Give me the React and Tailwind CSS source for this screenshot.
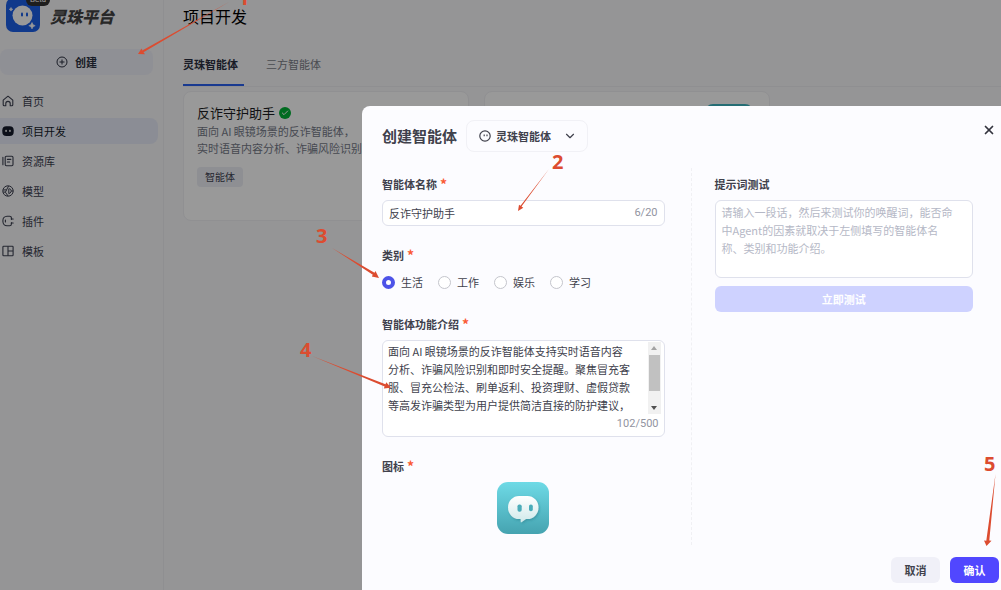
import { Check, ChevronDown, X } from "lucide-react";

const HomeIcon = () => (
  <svg viewBox="0 0 12 12" className="size-3" fill="none" stroke="currentColor" strokeWidth="1.1" strokeLinejoin="round">
    <path d="M1.2 5.2 6 1.2l4.8 4v4.6a1 1 0 0 1-1 1H8.2V8.6a2.2 2.2 0 0 0-4.4 0v2.2H2.2a1 1 0 0 1-1-1z" />
  </svg>
);

const BotIcon = () => (
  <svg viewBox="0 0 12 12" className="size-3">
    <rect x="0.3" y="1.3" width="11.4" height="9.6" rx="4" fill="currentColor" />
    <rect x="3.3" y="4.8" width="1.5" height="2.2" rx="0.7" fill="#fff" />
    <rect x="7.2" y="4.8" width="1.5" height="2.2" rx="0.7" fill="#fff" />
  </svg>
);

const LibraryIcon = () => (
  <svg viewBox="0 0 12 12" className="size-3" fill="none" stroke="currentColor" strokeWidth="1.1" strokeLinecap="round">
    <rect x="3.2" y="1.2" width="7.8" height="9.6" rx="1.2" />
    <path d="M.9 2.2v7.6M5.4 4.4h3.4M5.4 7h2.2" />
  </svg>
);

const ModelIcon = () => (
  <svg viewBox="0 0 12 12" className="size-3" fill="none" stroke="currentColor" strokeWidth="1">
    <circle cx="6" cy="6" r="5.2" />
    <path d="M1.200 5 4.600 4.800 6.600 1M4.600 4.800 3.400 7.200 6 11M3.400 7.200 1.200 7M6.800 3.800v4.800M6.800 3.800c3-.6 3.200 4.400 0 4.800M9 6h2.200" />
  </svg>
);

const PluginIcon = () => (
  <svg viewBox="0 0 12 12" className="size-3" fill="none" stroke="currentColor" strokeWidth="1.1" strokeLinecap="round">
    <path d="M9.4 3.6V3a1.8 1.8 0 0 0-1.8-1.800H5A4.200 4.200 0 0 0 .9 5.400v1.200A4.200 4.200 0 0 0 5 10.800h2.600A1.800 1.800 0 0 0 9.400 9v-.6" />
    <path d="M9.400 3.600v.8M9.400 7.600v.8M9.400 4h1.800M9.400 8h1.800M3.400 5v2" />
  </svg>
);

const TemplateIcon = () => (
  <svg viewBox="0 0 12 12" className="size-3" fill="none" stroke="currentColor" strokeWidth="1.1">
    <rect x="0.9" y="1.2" width="10.2" height="9.6" rx="0.8" />
    <path d="M6 1.2v9.6M6 6h5" />
  </svg>
);

const navigation = [
  { title: "首页", icon: HomeIcon },
  { title: "项目开发", icon: BotIcon, active: true },
  { title: "资源库", icon: LibraryIcon },
  { title: "模型", icon: ModelIcon },
  { title: "插件", icon: PluginIcon },
  { title: "模板", icon: TemplateIcon },
];

const categories = ["生活", "工作", "娱乐", "学习"];

const intro = `面向 AI 眼镜场景的反诈智能体支持实时语音内容
分析、诈骗风险识别和即时安全提醒。聚焦冒充客
服、冒充公检法、刷单返利、投资理财、虚假贷款
等高发诈骗类型为用户提供简洁直接的防护建议，`;

const testHint = `请输入一段话，然后来测试你的唤醒词，能否命
中Agent的因素就取决于左侧填写的智能体名
称、类别和功能介绍。`;

const Logo = () => (
  <div className="relative -mt-0.5 size-[34px] shrink-0">
    <svg viewBox="0 0 34 34" className="size-full">
      <rect width="34" height="34" rx="7" fill="#1c5fe8" />
      <circle cx="16.5" cy="17.5" r="10" fill="#fff" />
      <rect x="15" y="14.5" width="2" height="4" rx="1" fill="#1c5fe8" />
      <rect x="20" y="14.5" width="2" height="4" rx="1" fill="#1c5fe8" />
      <path d="M26 24.5q.5 2.7 3.2 3.2-2.7.5-3.2 3.2-.5-2.7-3.2-3.2 2.7-.5 3.2-3.2zM5 9.500q.3 1.500 1.800 1.800-1.500.3-1.800 1.800-.3-1.500-1.800-1.800 1.500-.3 1.800-1.800z" fill="#fff" stroke="#fff" strokeWidth=".6" />
    </svg>
    <span className="absolute -top-1 left-5 rounded-full bg-[#333] px-1 font-[Roboto,sans-serif] text-[8px] leading-3 text-white">
      Beta
    </span>
  </div>
);

const Sidebar = () => (
  <aside className="w-[164px] shrink-0 border-r border-[#efeff2] bg-[#f8f8fb]">
    <div className="flex h-8 items-center gap-2.5 pl-1.5">
      <Logo />
      <span className="text-base leading-8 font-black text-[#444] italic">灵珠平台</span>
    </div>
    <button className="mt-[17px] flex h-[26px] w-[153px] items-center justify-center gap-[7px] rounded-lg bg-[#eff0f8] text-[11px] font-bold text-[#2b3040]">
      <svg viewBox="0 0 12 12" className="size-3" fill="none" stroke="currentColor" strokeWidth="1">
        <circle cx="6" cy="6" r="5" />
        <path d="M6 3.500v5M3.500 6h5" />
      </svg>
      创建
    </button>
    <nav className="mt-[13px] flex flex-col gap-1">
      {navigation.map((item) => (
        <a
          key={item.title}
          href="#"
          className={`flex h-[26px] w-[158px] items-center gap-2 rounded-r-lg pl-0.5 text-[11px] ${
            item.active ? "bg-[#e8ecf8] text-[#141a2b]" : "text-[#3d4150]"
          }`}
        >
          <item.icon />
          {item.title}
        </a>
      ))}
    </nav>
  </aside>
);

const Projects = () => (
  <main className="min-w-0 flex-1 bg-[#f8f8fb] pl-[19px]">
    <h1 className="text-base leading-8 text-black">项目开发</h1>
    <div className="mt-5 flex h-[35px] gap-[22px] border-b border-[#efeff2] text-[11px]">
      <a href="#" className="w-[61px] border-b-2 border-[#2a62f0] leading-6 font-bold text-[#2b3040]">
        灵珠智能体
      </a>
      <a href="#" className="leading-6 text-[#7b7e88]">
        三方智能体
      </a>
    </div>
    <div className="mt-1 flex gap-[15px]">
      <article className="h-[130px] w-[286px] rounded-lg border border-[#f0f0f4] bg-white px-[13px] pt-[11px]">
        <h2 className="flex items-center gap-1 text-[13px] leading-5 text-[#1c1d22]">
          反诈守护助手
          <span className="flex size-3 items-center justify-center rounded-full bg-[#00b336] text-white">
            <Check size={8} strokeWidth={3} />
          </span>
        </h2>
        <p className="text-[11px] leading-[17px] whitespace-nowrap text-[#757a88]">
          面向 AI 眼镜场景的反诈智能体，
          <br />
          实时语音内容分析、诈骗风险识别和
        </p>
        <span className="mt-2.5 inline-block rounded-sm bg-[#edeff6] px-2 text-[10px] leading-5 text-[#3d4150]">
          智能体
        </span>
      </article>
      <article className="flex h-[130px] w-[286px] justify-end rounded-lg border border-[#f0f0f4] bg-white px-4 pt-3">
        <span className="size-12 rounded-lg bg-[#3fb6c2]" />
      </article>
    </div>
  </main>
);

const Required = () => <span className="text-sm leading-3 text-[#fa5a35]">*</span>;

const Label = ({ children, htmlFor }) => (
  <label htmlFor={htmlFor} className="flex h-4 items-center gap-[3px] text-[11px] leading-4 font-bold text-[#40414c]">
    {children}
    <Required />
  </label>
);

const AgentForm = () => (
  <div className="flex flex-col gap-[21px] border-r border-dashed border-[#f0f0f4] pt-2 pr-[26px] pb-[11px]">
    <div className="flex flex-col gap-2">
      <Label htmlFor="name">智能体名称</Label>
      <div className="flex h-[26px] items-center rounded-md border border-[#dfe1ec] bg-white px-1.5 text-[11px]">
        <input id="name" defaultValue="反诈守护助手" className="min-w-0 flex-1 text-[#40414c] outline-none" />
        <span className="font-[Roboto,sans-serif] text-[#92949f]">6/20</span>
      </div>
    </div>

    <fieldset className="flex flex-col gap-2">
      <legend className="contents">
        <span className="flex h-4 items-center gap-[3px] text-[11px] leading-4 font-bold text-[#40414c]">
          类别
          <Required />
        </span>
      </legend>
      <div className="flex h-[22px] items-center gap-[15px]">
        {categories.map((name, i) => (
          <label key={name} className="flex items-center gap-1.5 text-[11px] text-[#40414c]">
            <input
              type="radio"
              name="category"
              defaultChecked={i === 0}
              className="size-[13px] appearance-none rounded-full border border-[#c4c5cc] bg-white checked:border-4 checked:border-[#4d53e8]"
            />
            {name}
          </label>
        ))}
      </div>
    </fieldset>

    <div className="flex flex-col gap-2 pt-0.5">
      <Label htmlFor="intro">智能体功能介绍</Label>
      <div className="h-[97px] rounded-md border border-[#dfe1ec] bg-white pt-px pr-[3px] pl-[5px]">
        <div className="flex">
          <textarea
            id="intro"
            rows={4}
            defaultValue={intro}
            className="min-w-0 flex-1 resize-none overflow-hidden text-[11px] leading-[18px] text-[#40414c] outline-none"
          />
          <div className="flex w-[13px] flex-col items-center justify-between bg-[#f1f1f1] py-1">
            <span className="border-x-[3px] border-b-4 border-x-transparent border-b-[#a3a3a3]" />
            <span className="mb-2.5 h-9 w-[11px] bg-[#c1c1c1]" />
            <span className="border-x-[3px] border-t-4 border-x-transparent border-t-[#505050]" />
          </div>
        </div>
        <p className="pr-0.5 text-right font-[Roboto,sans-serif] text-[11px] leading-5 text-[#92949f]">102/500</p>
      </div>
    </div>

    <div className="flex flex-col gap-2">
      <Label>图标</Label>
      <button aria-label="图标" className="self-center">
        <svg viewBox="0 0 52 52" className="size-[52px]">
          <defs>
            <linearGradient id="tile" x1="0" y1="0" x2="0" y2="1">
              <stop stopColor="#6edae6" />
              <stop offset="1" stopColor="#45a3b0" />
            </linearGradient>
            <linearGradient id="face" x1="0" y1="0" x2="0" y2="1">
              <stop stopColor="#fff" />
              <stop offset="1" stopColor="#cfe9ea" />
            </linearGradient>
            <filter id="soft" x="-20%" y="-20%" width="140%" height="150%">
              <feDropShadow dx="1" dy="1.5" stdDeviation="1.2" floodColor="#2c7f8c" floodOpacity=".5" />
            </filter>
          </defs>
          <rect width="52" height="52" rx="11" fill="url(#tile)" />
          <path
            d="M22 14h8.500a11 11.500 0 0 1 0 23H29l-4.500 3.300q-.8.300-.8-.8V37H22a11 11.500 0 0 1 0-23z"
            fill="url(#face)"
            filter="url(#soft)"
          />
          <rect x="20.500" y="22.500" width="4.200" height="7.200" rx="1.800" fill="#4aacb9" />
          <rect x="32" y="22.500" width="3.800" height="6.800" rx="1.800" fill="#4aacb9" />
        </svg>
      </button>
    </div>
  </div>
);

const PromptTest = () => (
  <div className="flex flex-col gap-2 pt-2 pr-7 pl-[23px]">
    <label htmlFor="prompt" className="text-[11px] leading-4 font-bold text-[#40414c]">
      提示词测试
    </label>
    <textarea
      id="prompt"
      placeholder={testHint}
      className="h-[78px] resize-none rounded-md border border-[#dfe1ec] bg-white px-1.5 pt-0.5 text-[11px] leading-[18px] outline-none placeholder:text-[#b5b8c6]"
    />
    <button className="h-[26px] rounded-md bg-[#ced2ff] text-[11px] font-bold text-white">立即测试</button>
  </div>
);

const CreateDialog = () => (
  <div className="absolute inset-0 flex bg-black/40 pt-[106px] pl-[362px]">
    <section role="dialog" aria-label="创建智能体" className="flex min-w-0 flex-1 flex-col rounded-tl-lg bg-[#fcfcff] pt-3.5 pl-5">
      <header className="flex items-center gap-[9px] pr-[5px]">
        <h2 className="text-[15px] leading-[30px] font-bold text-[#40414c]">创建智能体</h2>
        <div className="flex h-8 w-[122px] items-center gap-[5px] rounded-lg border border-[#f1f1f6] pl-3 text-[#40414c]">
          <svg viewBox="0 0 12 12" className="size-3 shrink-0" fill="none" stroke="currentColor" strokeWidth="1.2">
            <circle cx="6" cy="6" r="5.200" />
            <path d="M5.200 4.500v1.800M8 4.500v1.800" />
          </svg>
          <select aria-label="智能体类型" className="w-[62px] appearance-none text-[11px] font-bold outline-none">
            <option>灵珠智能体</option>
          </select>
          <ChevronDown size={14} strokeWidth={2} />
        </div>
        <button aria-label="关闭" className="mt-[-13px] ml-auto text-[#33343e]">
          <X size={14} strokeWidth={3} />
        </button>
      </header>
      <div className="mt-4 grid grid-cols-2">
        <AgentForm />
        <PromptTest />
      </div>
      <footer className="mt-3 flex justify-end gap-2.5 pr-0.5 text-[11px] font-bold">
        <button className="h-[26px] w-[49px] rounded-md bg-[#f0f0f8] text-[#40414c]">取消</button>
        <button className="h-[26px] w-[49px] rounded-md bg-[#5147ff] text-white">确认</button>
      </footer>
    </section>
  </div>
);

// numbered steps with their arrows, drawn over the whole page
const Steps = () => (
  <div className="pointer-events-none absolute inset-0 overflow-hidden font-['Noto_Sans',sans-serif] text-xl leading-5 font-bold text-[#dc4c30]">
    <svg width="1001" height="590" className="absolute top-0 left-0" fill="currentColor">
      <path d="M229 2 143.500 52.300l1.500 2L138 54l3.500-5.500.8 2z" />
      <path d="m549 169-27.500 37.500 1.800 1.200-5.300 3.300 1-6.300 1.500 1z" />
      <path d="m332 248 42.500 24.800 1-1.800 3.500 7-7.200-1.500 1-1.800z" />
      <path d="m312 356 73.500 28.200.8-2 4.700 5.500-7.200.8.8-2z" />
      <path d="m995.500 474-6.200 66.500 2.200.3L986.500 546l-2.500-5.500 2.300.2z" />
    </svg>
    <span className="absolute -top-3 left-[238px]">1</span>
    <span className="absolute top-[152px] left-[552px]">2</span>
    <span className="absolute top-[226px] left-[316px]">3</span>
    <span className="absolute top-[340px] left-[300px]">4</span>
    <span className="absolute top-[454px] left-[984px]">5</span>
  </div>
);

const App = () => {
  return (
    <div className="relative flex min-h-screen overflow-hidden font-['Noto_Sans_CJK_SC',sans-serif]">
      <Sidebar />
      <Projects />
      <CreateDialog />
      <Steps />
    </div>
  );
};

export default App;
